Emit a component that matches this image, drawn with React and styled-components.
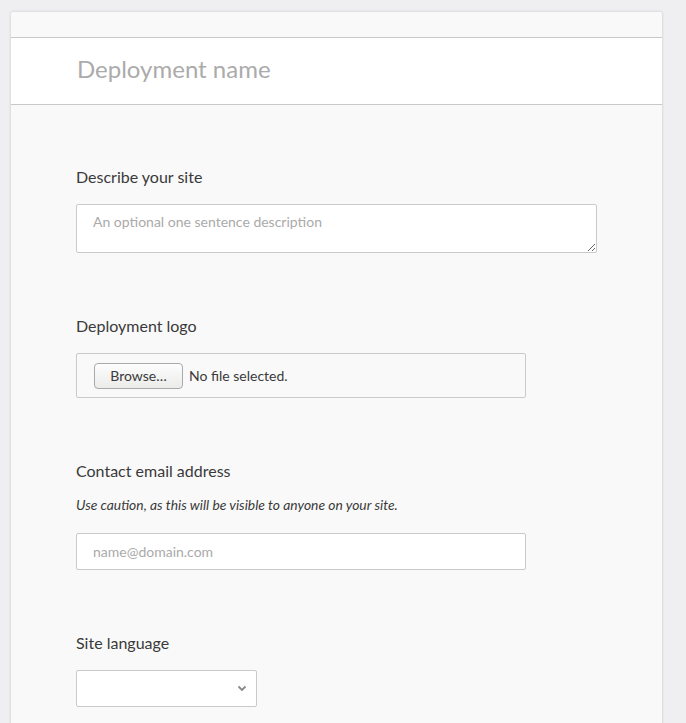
import React from 'react'
import styled, { createGlobalStyle } from 'styled-components'

const GlobalStyle = createGlobalStyle`
  body {
    margin: 0;
    background: #efeff1;
    font-family: Lato, 'Liberation Sans', sans-serif;
    color: #3a3a3a;
  }
`

const Page = styled.div`
  padding: 12px 0 0 11px;
`

const Card = styled.div`
  width: 651px;
  background: #f9f9f9;
  border-radius: 2px 2px 0 0;
  box-shadow: 0 0 3px rgba(0, 0, 0, 0.18);
`

const TopBar = styled.div`
  height: 25px;
  border-bottom: 1px solid #c8c8c8;
`

const NameHeader = styled.div`
  box-sizing: border-box;
  height: 67px;
  background: #fff;
  border-bottom: 1px solid #c8c8c8;
  display: flex;
  align-items: center;
  padding: 0 0 5px 66px;
  font-size: 24px;
  color: #ababab;
`

const Body = styled.div`
  padding: 62px 0 20px 65px;
`

const Field = styled.div`
  & + & {
    margin-top: 63px;
  }
`

const Label = styled.div`
  font-size: 16px;
  line-height: 20px;
  color: #3a3a3a;
  margin-bottom: 17px;
`

const Help = styled.div`
  font-size: 13.85px;
  font-style: italic;
  line-height: 18px;
  margin: -2px 0 19px;
  color: #3a3a3a;
`

const TextArea = styled.textarea`
  display: block;
  box-sizing: border-box;
  width: 521px;
  height: 49px;
  margin: 0;
  padding: 8px 16px;
  border: 1px solid #cacaca;
  border-radius: 2px;
  background: #fff;
  font-family: Lato, 'Liberation Sans', sans-serif;
  font-size: 14px;
  color: #333;
  &::placeholder {
    color: #aaa;
  }
`

const FileBox = styled.div`
  box-sizing: border-box;
  width: 450px;
  height: 45px;
  border: 1px solid #cacaca;
  border-radius: 2px;
  display: flex;
  align-items: center;
  padding-left: 17px;
  gap: 6px;
  font-size: 14px;
  color: #3a3a3a;
`

const BrowseButton = styled.button`
  box-sizing: border-box;
  width: 89px;
  height: 26px;
  border: 1px solid #a9a9a9;
  border-radius: 4px;
  background: linear-gradient(#fdfdfd, #ebebea);
  font-family: Lato, 'Liberation Sans', sans-serif;
  font-size: 14px;
  color: #3a3a3a;
  padding: 0;
`

const TextInput = styled.input`
  display: block;
  box-sizing: border-box;
  width: 450px;
  height: 37px;
  margin: 0;
  padding: 0 16px;
  border: 1px solid #cacaca;
  border-radius: 2px;
  background: #fff;
  font-family: Lato, 'Liberation Sans', sans-serif;
  font-size: 14px;
  &::placeholder {
    color: #aaa;
  }
`

const SelectBox = styled.div`
  box-sizing: border-box;
  width: 181px;
  height: 37px;
  border: 1px solid #cacaca;
  border-radius: 2px;
  background: #fff;
  display: flex;
  align-items: center;
  justify-content: flex-end;
  padding-right: 9px;
`

const Chevron = () => (
  <svg width="10" height="7" viewBox="0 0 10 7">
    <path d="M1.5 1.5l3.5 3.5 3.5-3.5" fill="none" stroke="#888" strokeWidth="1.8" />
  </svg>
)

export default function App() {
  return (
    <Page>
      <GlobalStyle />
      <Card>
        <TopBar />
        <NameHeader>Deployment name</NameHeader>
        <Body>
          <Field>
            <Label>Describe your site</Label>
            <TextArea placeholder="An optional one sentence description" />
          </Field>
          <Field>
            <Label>Deployment logo</Label>
            <FileBox>
              <BrowseButton>Browse…</BrowseButton>
              <span>No file selected.</span>
            </FileBox>
          </Field>
          <Field>
            <Label>Contact email address</Label>
            <Help>Use caution, as this will be visible to anyone on your site.</Help>
            <TextInput placeholder="name@domain.com" />
          </Field>
          <Field>
            <Label>Site language</Label>
            <SelectBox>
              <Chevron />
            </SelectBox>
          </Field>
        </Body>
      </Card>
    </Page>
  )
}
